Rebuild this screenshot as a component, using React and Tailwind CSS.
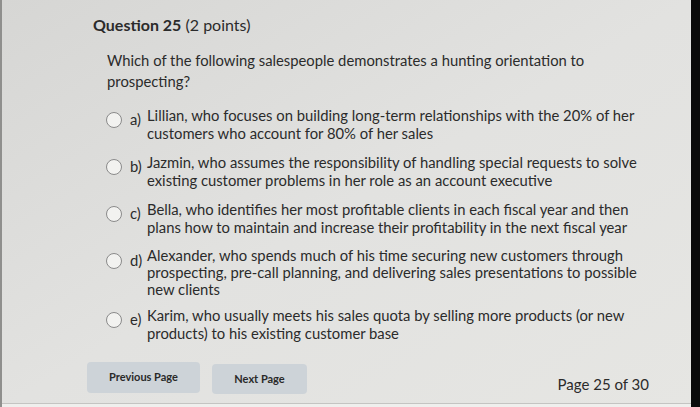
const options = [
  {
    key: "a)",
    lines: [
      "Lillian, who focuses on building long-term relationships with the 20% of her",
      "customers who account for 80% of her sales",
    ],
  },
  {
    key: "b)",
    lines: [
      "Jazmin, who assumes the responsibility of handling special requests to solve",
      "existing customer problems in her role as an account executive",
    ],
  },
  {
    key: "c)",
    lines: [
      "Bella, who identifies her most profitable clients in each fiscal year and then",
      "plans how to maintain and increase their profitability in the next fiscal year",
    ],
  },
  {
    key: "d)",
    lines: [
      "Alexander, who spends much of his time securing new customers through",
      "prospecting, pre-call planning, and delivering sales presentations to possible",
      "new clients",
    ],
    tight: true,
  },
  {
    key: "e)",
    lines: [
      "Karim, who usually meets his sales quota by selling more products (or new",
      "products) to his existing customer base",
    ],
    pull: true,
  },
]

function Option({ option }) {
  return (
    <div className={option.pull ? "flex items-start mt-[-3px]" : "flex items-start"}>
      <span className="mt-[6px] w-[16px] h-[16px] rounded-full border border-[#8a8a8a] bg-[#f2f2f0] shrink-0" />
      <span className="ml-[8px] w-[17px] mt-[4px] leading-[18px]">{option.key}</span>
      <div className={option.tight ? "leading-[17px]" : "leading-[18px]"}>
        {option.lines.map((line) => (
          <div key={line}>{line}</div>
        ))}
      </div>
    </div>
  )
}

export default function App() {
  return (
    <div
      className="w-[700px] h-[407px] flex overflow-hidden text-[#2b2b2b]"
      style={{ fontFamily: "Lato, 'Open Sans', sans-serif" }}
    >
      <div className="w-[2px] bg-[#8f8f8d] shrink-0" />

      <div className="flex-1 flex flex-col bg-gradient-to-br from-[#d6d6d4] via-[#e2e2e0] to-[#e6e6e3]">
        <main className="flex-1 pl-[91px] pr-4 pt-[15px]">
          <h1 className="text-[16px] leading-[20px]">
            <span className="font-bold">Question 25</span> (2 points)
          </h1>

          <p className="mt-[15px] ml-[14px] text-[14.8px] leading-[21px]">
            Which of the following salespeople demonstrates a hunting orientation to
            <br />
            prospecting?
          </p>

          <div className="mt-[14px] ml-[13px] flex flex-col gap-[11px] text-[14.8px]">
            {options.map((o) => (
              <Option key={o.key} option={o} />
            ))}
          </div>

          <div className="mt-[20px] flex items-start">
            <button className="ml-[-6px] w-[113px] h-[31px] rounded-[4px] bg-[#cdd3d8] text-[11px] font-bold text-[#2a2a2a]">
              Previous Page
            </button>
            <button className="ml-[12px] mt-[2px] w-[95px] h-[30px] rounded-[4px] bg-[#cdd3d8] text-[11px] font-bold text-[#2a2a2a]">
              Next Page
            </button>
            <span className="ml-auto mr-[26px] mt-[12px] text-[15px] leading-[20px]">
              Page 25 of 30
            </span>
          </div>
        </main>
        <div className="h-[1px] bg-[#c4c4c2]" />
        <div className="h-[3px] bg-[#efefed]" />
      </div>

      <div className="w-[9px] bg-[#0b0b0b] shrink-0" />
    </div>
  )
}
